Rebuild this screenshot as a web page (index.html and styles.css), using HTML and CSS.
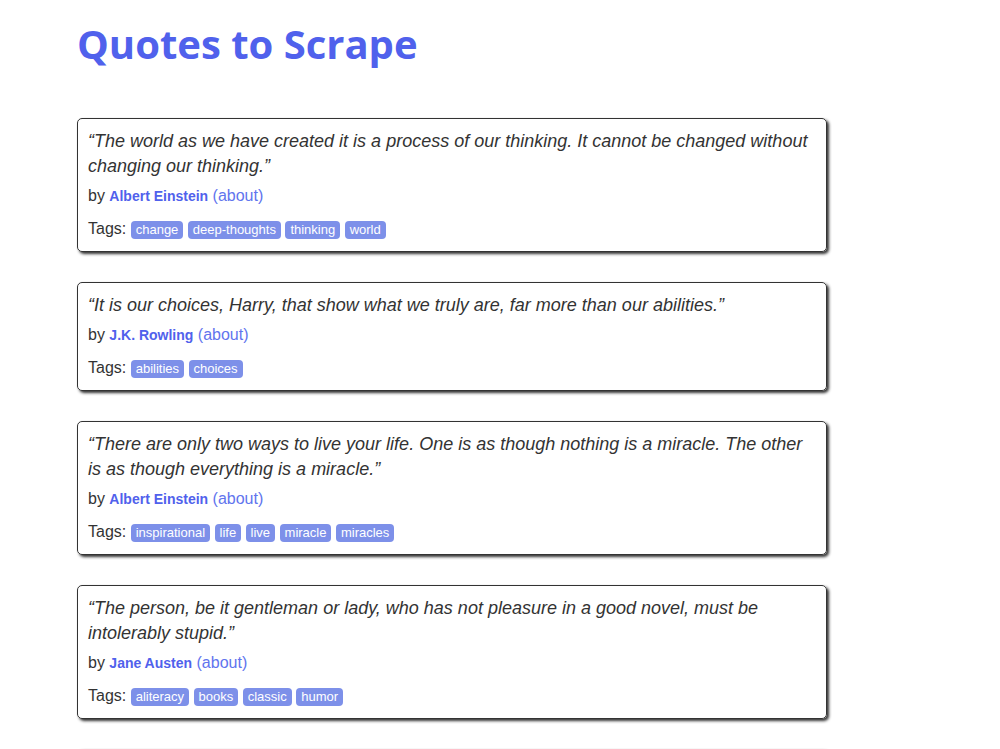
FILE: index.html
```html
<!DOCTYPE html>
<html lang="en">
<head>
  <meta charset="UTF-8">
  <meta name="viewport" content="width=device-width, initial-scale=1.0">
  <title>Quotes to Scrape</title>
  <link rel="stylesheet" href="styles.css">
</head>
<body>
  <div class="container">
    <h1 class="title">Quotes to Scrape</h1>

    <div class="quote">
      <p class="text">“The world as we have created it is a process of our thinking. It cannot be changed without changing our thinking.”</p>
      <div class="by">by <span class="author">Albert Einstein</span> <a href="#" class="about">(about)</a></div>
      <div class="tags">Tags:
        <a href="#" class="tag">change</a>
        <a href="#" class="tag">deep-thoughts</a>
        <a href="#" class="tag">thinking</a>
        <a href="#" class="tag">world</a>
      </div>
    </div>

    <div class="quote">
      <p class="text">“It is our choices, Harry, that show what we truly are, far more than our abilities.”</p>
      <div class="by">by <span class="author">J.K. Rowling</span> <a href="#" class="about">(about)</a></div>
      <div class="tags">Tags:
        <a href="#" class="tag">abilities</a>
        <a href="#" class="tag">choices</a>
      </div>
    </div>

    <div class="quote">
      <p class="text">“There are only two ways to live your life. One is as though nothing is a miracle. The other is as though everything is a miracle.”</p>
      <div class="by">by <span class="author">Albert Einstein</span> <a href="#" class="about">(about)</a></div>
      <div class="tags">Tags:
        <a href="#" class="tag">inspirational</a>
        <a href="#" class="tag">life</a>
        <a href="#" class="tag">live</a>
        <a href="#" class="tag">miracle</a>
        <a href="#" class="tag">miracles</a>
      </div>
    </div>

    <div class="quote">
      <p class="text">“The person, be it gentleman or lady, who has not pleasure in a good novel, must be intolerably stupid.”</p>
      <div class="by">by <span class="author">Jane Austen</span> <a href="#" class="about">(about)</a></div>
      <div class="tags">Tags:
        <a href="#" class="tag">aliteracy</a>
        <a href="#" class="tag">books</a>
        <a href="#" class="tag">classic</a>
        <a href="#" class="tag">humor</a>
      </div>
    </div>

    <div class="quote">
      <p class="text">“Imperfection is beauty, madness is genius and it's better to be absolutely ridiculous than absolutely boring.”</p>
      <div class="by">by <span class="author">Marilyn Monroe</span> <a href="#" class="about">(about)</a></div>
      <div class="tags">Tags:
        <a href="#" class="tag">be-yourself</a>
        <a href="#" class="tag">inspirational</a>
      </div>
    </div>
  </div>
</body>
</html>
```

FILE: styles.css
```css
body {
  margin: 0;
  font-family: "Liberation Sans", Arial, sans-serif;
  color: #333;
  background: #fff;
}

.container {
  width: 750px;
  padding: 0 0 0 77px;
}

.title {
  font-family: "Open Sans", sans-serif;
  font-weight: 700;
  font-size: 40px;
  line-height: 48px;
  color: #5061ec;
  margin: 20px 0 50px;
}

.quote {
  border: 1px solid #333;
  border-radius: 5px;
  box-shadow: 2px 2px 3px #333;
  padding: 10px;
  margin-bottom: 30px;
}

.text {
  font-style: italic;
  font-size: 18px;
  line-height: 25px;
  margin: 0;
}

.by {
  font-size: 16px;
  line-height: 23px;
  margin-top: 5px;
}

.author {
  font-weight: 700;
  font-size: 14px;
  color: #5061ec;
}

.about {
  color: #6174ee;
  text-decoration: none;
}

.tags {
  font-size: 16px;
  line-height: 24px;
  margin-top: 9px;
}

.tag {
  display: inline-block;
  background: #7d90e9;
  color: #fff;
  font-size: 13px;
  line-height: 18px;
  padding: 0 5px;
  border-radius: 4px;
  text-decoration: none;
}
```
